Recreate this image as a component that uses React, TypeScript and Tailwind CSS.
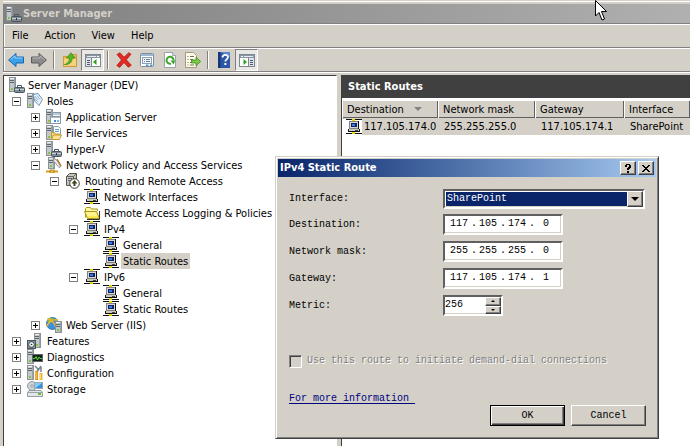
import React from "react";

type IconProps = { className?: string };

function Svg({ children, className = "h-4 w-4" }: { children: React.ReactNode; className?: string }) {
  return (
    <svg viewBox="0 0 16 16" className={`shrink-0 ${className}`} aria-hidden="true">
      {children}
    </svg>
  );
}

/* Grey tower that most of the role icons are built on */
function Tower({ x = 0, y = 0, h = 15 }: { x?: number; y?: number; h?: number }) {
  return (
    <g transform={`translate(${x} ${y})`} shapeRendering="crispEdges">
      <rect x="0" y="0" width="7" height={h} fill="#8b9196" />
      <rect x="1" y="1" width="5" height={h - 2} fill="#c3c8cb" />
      <rect x="5" y="1" width="1" height={h - 2} fill="#9da4a9" />
      <rect x="1" y="1" width="4" height="1" fill="#eef1f2" />
      <rect x="1" y="3" width="4" height="1" fill="#5d666d" />
      <rect x="1" y="5" width="4" height="1" fill="#5d666d" />
      <rect x="2" y={h - 4} width="2" height="2" fill="#84c43c" />
    </g>
  );
}

function ServerToolboxIcon({ className }: IconProps) {
  return (
    <Svg className={className}>
      <Tower />
      <path d="M8.500 10.500v-2h4v2" fill="none" stroke="#4d565e" />
      <rect x="5.500" y="10.500" width="10" height="5" rx="1" fill="#7f8b94" stroke="#4a555e" />
      <path d="M6 12.500h9" stroke="#c9d1d6" />
      <rect x="10" y="12" width="1" height="2" fill="#2d363d" />
    </Svg>
  );
}

function RolesIcon() {
  return (
    <Svg>
      <Tower />
      <path d="M6 1.500l5-1 4.500 6-3.500 6-4-4z" fill="#eaf3fb" stroke="#5f86a8" strokeWidth=".9" />
      <path d="M8 3l3 4M10 2.500l3 4M8 6l3 3" stroke="#84acd0" strokeWidth=".9" />
    </Svg>
  );
}

function AppServerIcon() {
  return (
    <Svg>
      <Tower />
      <rect x="6.500" y="3.500" width="8" height="7" fill="#f3f6f8" stroke="#8b98a3" />
      <path d="M7 5h7" stroke="#a9bccb" strokeWidth="1.500" />
      <rect x="4.500" y="7.500" width="10" height="7" fill="#fff" stroke="#8b98a3" />
      <path d="M5 8.500h9" stroke="#a9bccb" />
      <rect x="8" y="11" width="2" height="2" fill="#3b8fd6" />
      <rect x="11" y="11" width="2" height="2" fill="#7db5e2" />
    </Svg>
  );
}

function FileServicesIcon() {
  return (
    <Svg>
      <Tower />
      <path d="M7.500 1.500h5l2 2v7h-7z" fill="#f8fafc" stroke="#8fa0ad" />
      <path d="M9 4.500h4M9 6.500h4" stroke="#5f9ccb" />
      <path d="M5.500 14.500v-7h3l1 1.500h4v1" fill="#f5d477" stroke="#c79a33" />
      <path d="M5.500 14.500l2-4.500h8l-2 4.500z" fill="#fbe59a" stroke="#c79a33" />
    </Svg>
  );
}

function NetPolicyIcon() {
  return (
    <Svg>
      <Tower x={2} h={12} />
      <path d="M7 1.500l3 1 5 7-2 1-5-6z" fill="#e9ecef" stroke="#77828b" strokeWidth=".8" />
      <path d="M11 2l4 7" stroke="#b5742c" strokeWidth="1.500" />
      <path d="M0 14.500h12" stroke="#d99e1e" strokeWidth="2" />
      <rect x="4" y="13" width="4" height="3" fill="#f2c13b" stroke="#9c6d10" strokeWidth=".7" />
    </Svg>
  );
}

function RoutingIcon() {
  return (
    <Svg>
      <path d="M1.500 3.500l3-3h7v9l-3 3h-7z" fill="#c6c6c0" stroke="#55554f" />
      <path d="M1.500 3.500h7v8M8.500 3.500l3-3M3 5.500h4M3 7.500h3" fill="none" stroke="#65655f" />
      <circle cx="9.500" cy="10.500" r="4.800" fill="#fff" stroke="#333" />
      <path d="M9.500 7l3 3.500h-6z" fill="#3d4418" />
      <rect x="8.500" y="10" width="2" height="3" fill="#3d4418" />
    </Svg>
  );
}

function NetIcon() {
  return (
    <Svg>
      <g shapeRendering="crispEdges">
        <rect x="0" y="0" width="16" height="1" fill="#111" />
        <rect x="6" y="0" width="3" height="2" fill="#e8d800" />
        <rect x="3" y="2" width="10" height="8" fill="#111" />
        <rect x="3" y="2" width="9" height="8" fill="#808080" />
        <rect x="4" y="3" width="8" height="6" fill="#d8d8d0" />
        <rect x="5" y="4" width="6" height="4" fill="#10246a" />
        <rect x="6" y="5" width="3" height="2" fill="#3c7be0" />
        <rect x="2" y="10" width="12" height="3" fill="#111" />
        <rect x="3" y="10" width="10" height="2" fill="#c9c9c3" />
        <rect x="9" y="11" width="3" height="1" fill="#444" />
        <rect x="0" y="14" width="16" height="1" fill="#111" />
        <rect x="6" y="13" width="3" height="2" fill="#e8d800" />
      </g>
    </Svg>
  );
}

function FolderIcon() {
  return (
    <Svg>
      <path d="M1.500 12.500v-9l1-1h4l1 1.500h6v2" fill="#fff6a0" stroke="#a8951c" />
      <path d="M3.500 13.500l-3-7h12l3 7z" fill="#fbe94e" stroke="#a8951c" />
      <path d="M2 8h10M3 10h10" stroke="#fffbd0" />
      <path d="M3 14.500h12.500V6" fill="none" stroke="#333" />
    </Svg>
  );
}

function WebIcon() {
  return (
    <Svg>
      <circle cx="6.500" cy="6.500" r="6" fill="#3b92dc" stroke="#1d5f9f" strokeWidth=".8" />
      <path d="M1 4c2-4 5-3 7-2.500L6 5 3 6z" fill="#7dc043" />
      <path d="M1.500 1.500c4 1 7 4 9 10M1 9c2-5 6-7 11-6" fill="none" stroke="#f3b524" strokeWidth="1.600" />
      <Tower x={9} y={4} h={12} />
    </Svg>
  );
}

function FeaturesIcon() {
  return (
    <Svg>
      <Tower x={7} y={0} h={15} />
      <rect x=".5" y="7.500" width="8" height="8" fill="#8b979f" stroke="#4a555c" />
      <circle cx="4.500" cy="11.500" r="2.800" fill="#eef2f4" stroke="#27323a" strokeWidth=".8" />
      <circle cx="4.500" cy="11.500" r=".8" fill="#27323a" />
    </Svg>
  );
}

function DiagnosticsIcon() {
  return (
    <Svg>
      <Tower />
      <rect x="5.500" y="5.500" width="10" height="7" fill="#102416" stroke="#60676c" />
      <path d="M6 9.500h2l1-2 1.500 3.500 1.500-3 1 1.500h2" fill="none" stroke="#5fd641" />
    </Svg>
  );
}

function ConfigurationIcon() {
  return (
    <Svg>
      <Tower />
      <path d="M8 1l3 3-1 3 4-6M14 2v5" stroke="#7a858e" strokeWidth="1.500" fill="none" />
      <path d="M9.500 6v9" stroke="#e0971c" strokeWidth="3" />
      <path d="M14 8v7" stroke="#f3b52f" strokeWidth="3" />
      <path d="M9 7v7M13.500 9v5" stroke="#ffe08a" strokeWidth=".8" />
    </Svg>
  );
}

function StorageIcon() {
  return (
    <Svg>
      <circle cx="5" cy="5" r="4.500" fill="#cfd5d9" stroke="#7b868e" strokeWidth=".8" />
      <circle cx="5" cy="5" r="1.300" fill="#fff" stroke="#7b868e" strokeWidth=".8" />
      <rect x="7.500" y="1.500" width="8" height="6" fill="#2f8fe0" stroke="#9ba6ae" />
      <path d="M8 2h7L9 7H8z" fill="#86c8f6" />
      <path d="M2 9.500h12l1.500 2v4H.5v-4z" fill="#e3e6e8" stroke="#7b868e" strokeWidth=".8" />
      <path d="M1 11.500h14" stroke="#9aa4ab" />
      <rect x="11" y="12" width="3" height="2" fill="#6cbc35" />
    </Svg>
  );
}

type Node = {
  label: string;
  icon: () => React.ReactElement;
  state?: "open" | "closed";
  selected?: boolean;
  children?: Node[];
};

const tree: Node[] = [
  {
    label: "Roles",
    icon: RolesIcon,
    state: "open",
    children: [
      { label: "Application Server", icon: AppServerIcon, state: "closed" },
      { label: "File Services", icon: FileServicesIcon, state: "closed" },
      { label: "Hyper-V", icon: ServerToolboxIcon, state: "closed" },
      {
        label: "Network Policy and Access Services",
        icon: NetPolicyIcon,
        state: "open",
        children: [
          {
            label: "Routing and Remote Access",
            icon: RoutingIcon,
            state: "open",
            children: [
              { label: "Network Interfaces", icon: NetIcon },
              { label: "Remote Access Logging & Policies", icon: FolderIcon },
              {
                label: "IPv4",
                icon: NetIcon,
                state: "open",
                children: [
                  { label: "General", icon: NetIcon },
                  { label: "Static Routes", icon: NetIcon, selected: true },
                ],
              },
              {
                label: "IPv6",
                icon: NetIcon,
                state: "open",
                children: [
                  { label: "General", icon: NetIcon },
                  { label: "Static Routes", icon: NetIcon },
                ],
              },
            ],
          },
        ],
      },
      { label: "Web Server (IIS)", icon: WebIcon, state: "closed" },
    ],
  },
  { label: "Features", icon: FeaturesIcon, state: "closed" },
  { label: "Diagnostics", icon: DiagnosticsIcon, state: "closed" },
  { label: "Configuration", icon: ConfigurationIcon, state: "closed" },
  { label: "Storage", icon: StorageIcon, state: "closed" },
];

function Expander({ state, label }: { state?: "open" | "closed"; label: string }) {
  if (!state) return <span className="w-[9px] shrink-0" />;
  return (
    <button type="button" aria-label={`${state === "open" ? "Collapse" : "Expand"} ${label}`} className="shrink-0">
      <svg viewBox="0 0 9 9" className="block h-[9px] w-[9px]" shapeRendering="crispEdges" aria-hidden="true">
        <rect x=".5" y=".5" width="8" height="8" fill="#fff" stroke="#808080" />
        <path d={state === "open" ? "M2 4.500h5" : "M2 4.500h5M4.500 2v5"} stroke="#000" />
      </svg>
    </button>
  );
}

function Branch({ nodes }: { nodes: Node[] }) {
  return (
    <>
      {nodes.map((n, i) => (
        <li key={i} role="treeitem" aria-expanded={n.state ? n.state === "open" : undefined} aria-selected={!!n.selected}>
          <div className="flex h-4 items-center">
            <Expander state={n.state} label={n.label} />
            <span className="ml-1.5 flex">
              <n.icon />
            </span>
            <span className={n.selected ? "ml-0.5 h-4 bg-[#d4d0c8] px-0.5" : "ml-0.5 h-4 px-0.5"}>{n.label}</span>
          </div>
          {n.children && (
            <ul role="group" className="pl-[19px]">
              <Branch nodes={n.children} />
            </ul>
          )}
        </li>
      ))}
    </>
  );
}

function ArrowIcon({ right = false }: { right?: boolean }) {
  return (
    <Svg>
      <g transform={right ? "translate(16 0) scale(-1 1)" : undefined}>
        <path
          d="M.6 8L8 1.500V5h7.500v6H8v3.500z"
          fill={right ? "#8c8c8c" : "#3aa0ea"}
          stroke={right ? "#5a5a5a" : "#1c63b0"}
          strokeLinejoin="round"
        />
        <path d="M2.500 7.500L7 3.800V6h7.500" fill="none" stroke={right ? "#b9b9b9" : "#9bd6fb"} />
      </g>
    </Svg>
  );
}

function UpFolderIcon() {
  return (
    <Svg>
      <path d="M1.500 4.500h7l1-2h5v12h-13z" fill="#f0c04a" stroke="#c9993a" />
      <path d="M2 7h12v7H2z" fill="#f6d27a" />
      <path d="M2.500 12.500c4-1 5-4 5-6.500h-3L9 .8 13.200 6h-3c0 4-2.500 7-7.700 6.500z" fill="#55b52d" stroke="#2f8d16" strokeWidth=".7" />
    </Svg>
  );
}

function PaneIcon({ right = false }: { right?: boolean }) {
  return (
    <Svg>
      <g shapeRendering="crispEdges" transform={right ? "translate(16 0) scale(-1 1)" : undefined}>
        <rect x=".5" y="2.500" width="15" height="12" fill="#fff" stroke="#7d8791" />
        <rect x="1" y="3" width="14" height="3" fill="#8a96a1" />
        <rect x="2" y="4" width="9" height="1" fill="#e8edf1" />
        <rect x="12" y="4" width="2" height="1" fill="#fff" />
        <rect x="6" y="6" width="1" height="8" fill="#7d8791" />
        <rect x="1" y="6" width="5" height="8" fill="#dfe5ea" />
        <path d="M2 8.500h3M2 10.500h3M2 12.500h3" stroke="#4e5a65" />
      </g>
      <path d={right ? "M4.500 7v6L8 10z" : "M11.500 7v6L8 10z"} fill="#2aa01c" />
    </Svg>
  );
}

function DeleteIcon() {
  return (
    <Svg>
      <path
        d="M1 2.500L4 .8 8 5.200 12.800.8 15 2.200 10.300 7.800l5 5.400-3 2L8 10.600l-4.300 4.800L.8 13.500 5.500 8z"
        fill="#e02a22"
        stroke="#a8120d"
        strokeWidth=".7"
      />
    </Svg>
  );
}

function PropertiesIcon() {
  return (
    <Svg>
      <rect x="1.500" y="1.500" width="13" height="13" rx="1" fill="#fff" stroke="#7a8fa5" />
      <path d="M2 3h12" stroke="#9fb6cb" strokeWidth="2" />
      <rect x="3.500" y="5.500" width="9" height="6" fill="#f4f7fa" stroke="#8da0b3" />
      <path d="M5 7.500h1M7 7.500h4M5 9.500h1M7 9.500h4" stroke="#5c7ea0" />
      <path d="M7 13.200h2.500M11 13.200h2.500" stroke="#4f94d0" strokeWidth="1.500" />
    </Svg>
  );
}

function RefreshIcon() {
  return (
    <Svg>
      <path d="M2.500.5h8l3 3v12h-11z" fill="#fff" stroke="#9aa3aa" />
      <path d="M10.500.5v3h3" fill="#e2e6e9" stroke="#9aa3aa" />
      <path d="M9 11.600A3.500 3.500 0 1 1 11.500 8.500" fill="none" stroke="#3fa52a" strokeWidth="2" />
      <path d="M8.500 8.500h5L11.500 12.500z" fill="#3fa52a" />
    </Svg>
  );
}

function ExportIcon() {
  return (
    <Svg>
      <path d="M.5.5h8l3 3v12H.5z" fill="#fffbe6" stroke="#a09a80" />
      <path d="M2.500 4.500h1M5 4.500h4M2.500 7.500h1M5 7.500h3M2.500 10.500h1M5 10.500h2M2.500 13h1M5 13h4" stroke="#6f6f60" />
      <path d="M6.500 8H11V5.200L15.600 9.500 11 13.800V11H6.500z" fill="#7cc84a" stroke="#3d8a1f" strokeWidth=".8" />
    </Svg>
  );
}

function HelpIcon() {
  return (
    <Svg>
      <path d="M2 0h12v16H2z" fill="#2c57a6" />
      <path d="M2 0h2.500v16H2z" fill="#173874" />
      <path d="M4.500 0H14v5z" fill="#5c88cf" />
      <path d="M6.500 5.500c0-3.500 5.500-3.300 5.500-.3 0 2-2.700 2-2.700 4.300" fill="none" stroke="#fff" strokeWidth="1.800" />
      <rect x="8.400" y="11" width="2" height="2" fill="#fff" />
    </Svg>
  );
}

function ToolButton({ label, pressed, children }: { label: string; pressed?: boolean; children: React.ReactNode }) {
  return (
    <button
      type="button"
      aria-label={label}
      aria-pressed={pressed}
      className={
        pressed
          ? "flex h-[22px] w-[23px] items-center justify-center border border-t-[#808080] border-r-white border-b-white border-l-[#808080] bg-[#eae8e4]"
          : "flex h-[22px] w-[23px] items-center justify-center"
      }
    >
      {children}
    </button>
  );
}

function Separator() {
  return (
    <span className="flex w-2 justify-center">
      <span className="h-[18px] w-0.5 border-r border-l border-r-white border-l-[#808080]" />
    </span>
  );
}

const sunken =
  "border-2 border-t-[#606060] border-r-white border-b-white border-l-[#606060] bg-white shadow-[inset_-1px_-1px_0_#d4d0c8]";
const raised =
  "border border-t-white border-r-[#404040] border-b-[#404040] border-l-white bg-[#d4d0c8] shadow-[inset_-1px_-1px_0_#808080]";

function AddressField({ id, label, octets }: { id: string; label: string; octets: string[] }) {
  return (
    <div className="flex h-[21px] items-center">
      <label htmlFor={id} className="w-[154px]">
        {label}
      </label>
      <div className={`flex h-[21px] w-[120px] items-start pl-0.5 ${sunken}`}>
        {octets.map((o, i) => (
          <React.Fragment key={i}>
            {i > 0 && <span className="w-[5px] leading-4">.</span>}
            <input
              id={i === 0 ? id : undefined}
              aria-label={i === 0 ? undefined : `${label} part ${i + 1}`}
              defaultValue={o}
              className="h-4 w-6 bg-transparent text-center leading-4 outline-none"
            />
          </React.Fragment>
        ))}
      </div>
    </div>
  );
}

function Triangle({ up = false, className }: { up?: boolean; className: string }) {
  return (
    <svg viewBox="0 0 8 4" className={className} aria-hidden="true">
      <path d={up ? "M0 4h8L4 0z" : "M0 0h8L4 4z"} fill="currentColor" />
    </svg>
  );
}

function RouteDialog() {
  return (
    <section
      role="dialog"
      aria-labelledby="dialog-title"
      className="absolute top-[156px] left-[275px] w-[384px] border border-t-[#d4d0c8] border-r-[#404040] border-b-[#404040] border-l-[#d4d0c8] bg-[#d4d0c8] p-0.5 shadow-[inset_1px_1px_0_#fff,inset_-1px_-1px_0_#808080]"
    >
      <header className="flex h-[18px] items-center bg-linear-to-r from-[#0a246a] to-[#a6caf0] px-0.5 text-white">
        <h2 id="dialog-title" className="flex-1 text-[11px] leading-4 font-bold">
          IPv4 Static Route
        </h2>
        <div className="flex gap-0.5 text-black">
          <button type="button" aria-label="Help" className={`flex h-3.5 w-4 items-center justify-center ${raised}`}>
            <svg viewBox="0 0 8 9" className="h-[9px] w-2" shapeRendering="crispEdges" aria-hidden="true">
              <path d="M2 0h4v1h1v3H6v1H5v1H3V4h1V3h1V1H3v2H1V1h1zM3 7h2v2H3z" />
            </svg>
          </button>
          <button type="button" aria-label="Close" className={`flex h-3.5 w-4 items-center justify-center ${raised}`}>
            <svg viewBox="0 0 8 7" className="h-[7px] w-2" shapeRendering="crispEdges" aria-hidden="true">
              <path d="M0 0h2v1h1v1h2V1h1V0h2v1H7v1H6v1H5v1h1v1h1v1h1v1H6V6H5V5H3v1H2v1H0V6h1V5h1V4h1V3H2V2H1V1H0z" />
            </svg>
          </button>
        </div>
      </header>

      <form className="pt-3 pr-2.5 pb-2.5 pl-[11px] font-['Liberation_Mono',monospace] text-[10px] leading-4">
        <div className="flex h-5 items-center">
          <label htmlFor="iface" className="w-[154px]">
            Interface:
          </label>
          <div className={`relative h-5 w-[202px] p-px ${sunken}`}>
            <select
              id="iface"
              defaultValue="SharePoint"
              className="block h-3.5 w-[181px] appearance-none bg-[#0a246a] pl-px leading-[14px] text-white outline-none"
            >
              <option>SharePoint</option>
            </select>
            <span className={`pointer-events-none absolute top-0 right-0 flex h-4 w-4 items-center justify-center text-black ${raised}`}>
              <Triangle className="h-1 w-2" />
            </span>
          </div>
        </div>

        <div className="mt-[5px] flex flex-col gap-1.5">
          <AddressField id="dest" label="Destination:" octets={["117", "105", "174", "0"]} />
          <AddressField id="mask" label="Network mask:" octets={["255", "255", "255", "0"]} />
          <AddressField id="gateway" label="Gateway:" octets={["117", "105", "174", "1"]} />
          <div className="flex h-[21px] items-center">
            <label htmlFor="metric" className="w-[154px]">
              Metric:
            </label>
            <div className={`flex h-[21px] w-[60px] ${sunken}`}>
              <input id="metric" defaultValue="256" className="h-4 w-10 bg-transparent outline-none" />
              <div className="flex flex-1 flex-col">
                <button type="button" aria-label="Increase metric" className={`flex flex-1 items-center justify-center ${raised}`}>
                  <Triangle up className="h-0.5 w-1" />
                </button>
                <button type="button" aria-label="Decrease metric" className={`flex flex-1 items-center justify-center ${raised}`}>
                  <Triangle className="h-0.5 w-1" />
                </button>
              </div>
            </div>
          </div>
        </div>

        <label className="mt-[37px] flex h-4 items-center gap-[5px] text-[#808080] [text-shadow:1px_1px_0_#fff]">
          <input
            type="checkbox"
            disabled
            className="h-[13px] w-[13px] appearance-none border border-t-[#808080] border-r-white border-b-white border-l-[#808080] shadow-[inset_1px_1px_0_#404040]"
          />
          Use this route to initiate demand-dial connections
        </label>

        <a href="#more" className="mt-[22px] block w-fit whitespace-pre text-[#000080] underline underline-offset-2">
          {"For more information "}
        </a>

        <div className="-mt-0.5 flex justify-end gap-1.5">
          <button type="submit" className="h-[21px] w-[75px] border border-black bg-[#d4d0c8] shadow-[inset_1px_1px_0_#fff,inset_-1px_-1px_0_#404040,inset_-2px_-2px_0_#808080]">
            OK
          </button>
          <button type="button" className={`h-[21px] w-[75px] ${raised}`}>
            Cancel
          </button>
        </div>
      </form>
    </section>
  );
}

const columns = [
  { label: "Destination", width: "w-[96px]" },
  { label: "Network mask", width: "w-[97px]" },
  { label: "Gateway", width: "w-[89px]" },
  { label: "Interface", width: "w-auto" },
];

export default function App() {
  return (
    <div className="relative flex min-h-screen flex-col overflow-hidden bg-[#d4d0c8] pl-[3px] font-['DejaVu_Sans_Condensed',Tahoma,sans-serif] text-[11px] leading-[17px] text-black">
      <div className="mt-px h-[3px] border-t border-white" />
      <header className="flex h-[19px] items-center gap-px bg-linear-to-r from-[#808080] to-[#b0b0b0] pl-[3px] text-[#d4d0c8]">
        <ServerToolboxIcon className="h-4 w-4" />
        <h1 className="text-[11px] font-bold">Server Manager</h1>
      </header>

      <nav aria-label="Menu" className="flex h-6 items-center border-t border-l border-[#808080] shadow-[inset_1px_1px_0_#fff]">
        {["File", "Action", "View", "Help"].map((m) => (
          <button key={m} type="button" className="px-2">
            {m}
          </button>
        ))}
      </nav>

      <div
        role="toolbar"
        aria-label="Tools"
        className="flex h-[25px] items-center border-t border-b border-l border-[#808080] shadow-[inset_1px_1px_0_#fff]"
      >
        <ToolButton label="Back"><ArrowIcon /></ToolButton>
        <ToolButton label="Forward"><ArrowIcon right /></ToolButton>
        <Separator />
        <ToolButton label="Up one level"><UpFolderIcon /></ToolButton>
        <ToolButton label="Show console tree" pressed><PaneIcon /></ToolButton>
        <Separator />
        <ToolButton label="Delete"><DeleteIcon /></ToolButton>
        <ToolButton label="Properties"><PropertiesIcon /></ToolButton>
        <ToolButton label="Refresh"><RefreshIcon /></ToolButton>
        <ToolButton label="Export list"><ExportIcon /></ToolButton>
        <Separator />
        <ToolButton label="Help"><HelpIcon /></ToolButton>
        <ToolButton label="Show action pane" pressed><PaneIcon right /></ToolButton>
      </div>

      <main className="flex flex-1 border-t border-white pt-0.5">
        <aside className="w-[334px] shrink-0 border-t border-r border-l border-t-[#404040] border-r-white border-l-[#404040] bg-white pl-[3px]">
          <ul role="tree" aria-label="Console tree" className="pt-px">
            <li role="treeitem" aria-expanded="true">
              <div className="flex h-4 items-center gap-[3px] pl-0.5">
                <ServerToolboxIcon />
                <span className="h-4">Server Manager (DEV)</span>
              </div>
              <ul role="group" className="pl-[5px]">
                <Branch nodes={tree} />
              </ul>
            </li>
          </ul>
        </aside>

        <section className="ml-1 min-w-0 flex-1 border-t border-l border-[#404040] bg-white">
          <h2 className="h-[22px] bg-[#404040] pl-1.5 text-[11px] leading-[22px] font-bold text-white">
            Static Routes
          </h2>
          <table className="mt-0.5 w-full table-fixed border-collapse text-left">
            <thead>
              <tr>
                {columns.map((c, i) => (
                  <th key={c.label} className={`h-[18px] bg-[#d4d0c8] p-0 font-normal shadow-[inset_1px_1px_0_#fff,inset_-1px_-1px_0_#606060] ${c.width}`}>
                    <span className="flex items-center gap-2.5 pl-[5px] whitespace-nowrap">
                      {c.label}
                      {i === 0 && <Triangle className="h-1 w-2 text-[#808080]" />}
                    </span>
                  </th>
                ))}
              </tr>
            </thead>
            <tbody>
              <tr className="h-[17px] bg-[#d4d0c8]">
                <td className="p-0">
                  <span className="flex items-center">
                    <span className="bg-white pl-1"><NetIcon /></span>
                    <span className="pl-0.5">117.105.174.0</span>
                  </span>
                </td>
                <td className="p-0 pl-1.5">255.255.255.0</td>
                <td className="p-0 pl-1.5">117.105.174.1</td>
                <td className="p-0 pl-1.5">SharePoint</td>
              </tr>
            </tbody>
          </table>
        </section>
      </main>

      <RouteDialog />

      <svg viewBox="0 0 12 21" className="pointer-events-none absolute top-0 left-[595px] h-[21px] w-3" aria-hidden="true">
        <path d="M.5.5v15.500l3.500-3.500 3 7.500 2.500-1-3-7.500h5z" fill="#fff" stroke="#000" />
      </svg>
    </div>
  );
}
